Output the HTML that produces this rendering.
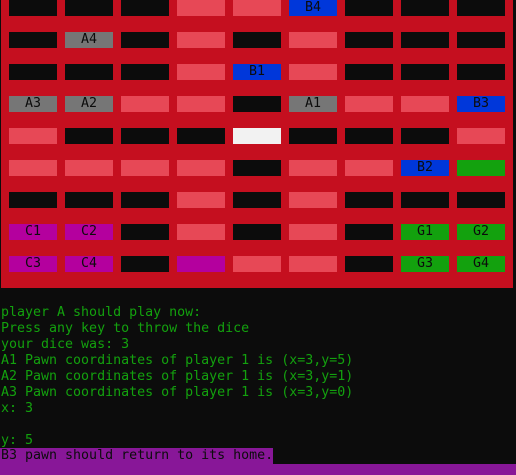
<!DOCTYPE html>
<html><head><style>
html,body{margin:0;padding:0;background:#0c0c0c;width:516px;height:475px;overflow:hidden;position:relative;font-family:"DejaVu Sans Mono","Liberation Mono",monospace;font-size:13.3px}
#board{position:absolute;left:1px;top:0;width:512px;height:288px;background:#c50f1f}
.c{position:absolute;width:48px;height:16px;line-height:16px;text-align:center;color:#0c0c0c}
.K{background:#0c0c0c}.P{background:#e74856}.G{background:#767676}.B{background:#0037da}
.W{background:#f2f2f2}.N{background:#13a10e}.M{background:#b4009e}
#con{position:absolute;left:1px;top:305px;color:#13a10e;line-height:16px;white-space:pre}
#hl{position:absolute;left:0;top:448px;width:273px;height:16px;background:#881798}
#bot{position:absolute;left:0;top:464px;width:516px;height:11px;background:#881798}
#hlt{position:absolute;left:1px;top:448px;line-height:16px;color:#0c0c0c;white-space:pre}
</style></head><body>
<div id="board"></div>
<div id="con">player A should play now:
Press any key to throw the dice
your dice was: 3
A1 Pawn coordinates of player 1 is (x=3,y=5)
A2 Pawn coordinates of player 1 is (x=3,y=1)
A3 Pawn coordinates of player 1 is (x=3,y=0)
x: 3

y: 5</div>
<div id="hl"></div><div id="bot"></div>
<div id="hlt">B3 pawn should return to its home.</div>
<div style="position:absolute;left:9px;top:0">
<div class="c K" style="left:0;top:0"></div><div class="c K" style="left:56px;top:0"></div><div class="c K" style="left:112px;top:0"></div><div class="c P" style="left:168px;top:0"></div><div class="c P" style="left:224px;top:0"></div><div class="c B" style="left:280px;top:0">B4</div><div class="c K" style="left:336px;top:0"></div><div class="c K" style="left:392px;top:0"></div><div class="c K" style="left:448px;top:0"></div>
<div class="c K" style="left:0;top:32px"></div><div class="c G" style="left:56px;top:32px">A4</div><div class="c K" style="left:112px;top:32px"></div><div class="c P" style="left:168px;top:32px"></div><div class="c K" style="left:224px;top:32px"></div><div class="c P" style="left:280px;top:32px"></div><div class="c K" style="left:336px;top:32px"></div><div class="c K" style="left:392px;top:32px"></div><div class="c K" style="left:448px;top:32px"></div>
<div class="c K" style="left:0;top:64px"></div><div class="c K" style="left:56px;top:64px"></div><div class="c K" style="left:112px;top:64px"></div><div class="c P" style="left:168px;top:64px"></div><div class="c B" style="left:224px;top:64px">B1</div><div class="c P" style="left:280px;top:64px"></div><div class="c K" style="left:336px;top:64px"></div><div class="c K" style="left:392px;top:64px"></div><div class="c K" style="left:448px;top:64px"></div>
<div class="c G" style="left:0;top:96px">A3</div><div class="c G" style="left:56px;top:96px">A2</div><div class="c P" style="left:112px;top:96px"></div><div class="c P" style="left:168px;top:96px"></div><div class="c K" style="left:224px;top:96px"></div><div class="c G" style="left:280px;top:96px">A1</div><div class="c P" style="left:336px;top:96px"></div><div class="c P" style="left:392px;top:96px"></div><div class="c B" style="left:448px;top:96px">B3</div>
<div class="c P" style="left:0;top:128px"></div><div class="c K" style="left:56px;top:128px"></div><div class="c K" style="left:112px;top:128px"></div><div class="c K" style="left:168px;top:128px"></div><div class="c W" style="left:224px;top:128px"></div><div class="c K" style="left:280px;top:128px"></div><div class="c K" style="left:336px;top:128px"></div><div class="c K" style="left:392px;top:128px"></div><div class="c P" style="left:448px;top:128px"></div>
<div class="c P" style="left:0;top:160px"></div><div class="c P" style="left:56px;top:160px"></div><div class="c P" style="left:112px;top:160px"></div><div class="c P" style="left:168px;top:160px"></div><div class="c K" style="left:224px;top:160px"></div><div class="c P" style="left:280px;top:160px"></div><div class="c P" style="left:336px;top:160px"></div><div class="c B" style="left:392px;top:160px">B2</div><div class="c N" style="left:448px;top:160px"></div>
<div class="c K" style="left:0;top:192px"></div><div class="c K" style="left:56px;top:192px"></div><div class="c K" style="left:112px;top:192px"></div><div class="c P" style="left:168px;top:192px"></div><div class="c K" style="left:224px;top:192px"></div><div class="c P" style="left:280px;top:192px"></div><div class="c K" style="left:336px;top:192px"></div><div class="c K" style="left:392px;top:192px"></div><div class="c K" style="left:448px;top:192px"></div>
<div class="c M" style="left:0;top:224px">C1</div><div class="c M" style="left:56px;top:224px">C2</div><div class="c K" style="left:112px;top:224px"></div><div class="c P" style="left:168px;top:224px"></div><div class="c K" style="left:224px;top:224px"></div><div class="c P" style="left:280px;top:224px"></div><div class="c K" style="left:336px;top:224px"></div><div class="c N" style="left:392px;top:224px">G1</div><div class="c N" style="left:448px;top:224px">G2</div>
<div class="c M" style="left:0;top:256px">C3</div><div class="c M" style="left:56px;top:256px">C4</div><div class="c K" style="left:112px;top:256px"></div><div class="c M" style="left:168px;top:256px"></div><div class="c P" style="left:224px;top:256px"></div><div class="c P" style="left:280px;top:256px"></div><div class="c K" style="left:336px;top:256px"></div><div class="c N" style="left:392px;top:256px">G3</div><div class="c N" style="left:448px;top:256px">G4</div>
</div>
</body></html>
